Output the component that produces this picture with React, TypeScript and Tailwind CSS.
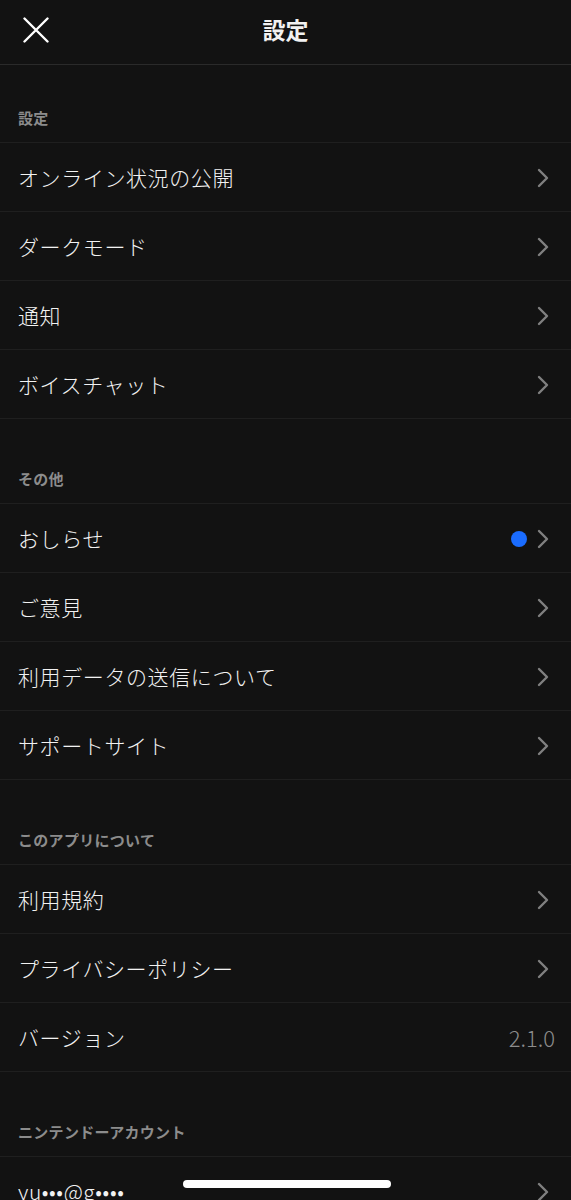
import React from "react";

type Row = { label: string; value?: string; dot?: boolean; chevron?: boolean };

const sections: { title: string; rows: Row[] }[] = [
  {
    title: "設定",
    rows: [
      { label: "オンライン状況の公開", chevron: true },
      { label: "ダークモード", chevron: true },
      { label: "通知", chevron: true },
      { label: "ボイスチャット", chevron: true },
    ],
  },
  {
    title: "その他",
    rows: [
      { label: "おしらせ", dot: true, chevron: true },
      { label: "ご意見", chevron: true },
      { label: "利用データの送信について", chevron: true },
      { label: "サポートサイト", chevron: true },
    ],
  },
  {
    title: "このアプリについて",
    rows: [
      { label: "利用規約", chevron: true },
      { label: "プライバシーポリシー", chevron: true },
      { label: "バージョン", value: "2.1.0" },
    ],
  },
  {
    title: "ニンテンドーアカウント",
    rows: [{ label: "yu•••@g••••", chevron: true }],
  },
];

const Chevron = () => (
  <svg width="14" height="20" viewBox="0 0 14 20" fill="none">
    <path
      d="M3 2l8 8-8 8"
      stroke="#808080"
      strokeWidth="2.4"
      strokeLinecap="round"
      strokeLinejoin="round"
    />
  </svg>
);

const CloseIcon = () => (
  <svg width="26" height="26" viewBox="0 0 26 26" fill="none">
    <path
      d="M1.5 1.5l23 23M24.5 1.5l-23 23"
      stroke="#ffffff"
      strokeWidth="2.4"
      strokeLinecap="round"
    />
  </svg>
);

export default function App() {
  return (
    <div
      className="relative h-[1200px] w-full overflow-hidden bg-[#121212] text-[#f2f2f2]"
      style={{ fontFamily: '"Noto Sans CJK JP", "Noto Sans", sans-serif' }}
    >
      {/* header */}
      <div className="relative flex h-[65px] items-center justify-center border-b border-[#2a2a2a] pb-[6px]">
        <button className="absolute left-[23px] top-[17px]">
          <CloseIcon />
        </button>
        <h1 className="text-[23px] font-bold leading-none">設定</h1>
      </div>

      {sections.map((section, i) => (
        <div
          key={section.title}
          className={
            i === 0
              ? "border-b border-[#1f1f1f]"
              : "mt-[7px] border-b border-[#1f1f1f]"
          }
        >
          <div className="px-[18px] pb-[14px] pt-[43px] text-[15px] font-bold leading-5 tracking-[0.3px] text-[#8c8c8c]">
            {section.title}
          </div>
          {section.rows.map((row) => (
            <div
              key={row.label}
              className="flex h-[69px] items-center justify-between border-t border-[#1f1f1f] pl-[18px] pr-[21px] pt-[1px]"
            >
              <span className="text-[21px] font-light leading-none tracking-[0.6px]">
                {row.label}
              </span>
              <div className="flex items-center gap-[9px]">
                {row.dot && (
                  <span className="h-4 w-4 rounded-full bg-[#1a6cff]" />
                )}
                {row.value && (
                  <span className="mr-[-5px] text-[22px] font-light text-[#8c8c8c]">
                    {row.value}
                  </span>
                )}
                {row.chevron && <Chevron />}
              </div>
            </div>
          ))}
        </div>
      ))}

      {/* home indicator */}
      <div className="absolute bottom-[12px] left-[183px] h-[8px] w-[208px] rounded-full bg-white" />
    </div>
  );
}
